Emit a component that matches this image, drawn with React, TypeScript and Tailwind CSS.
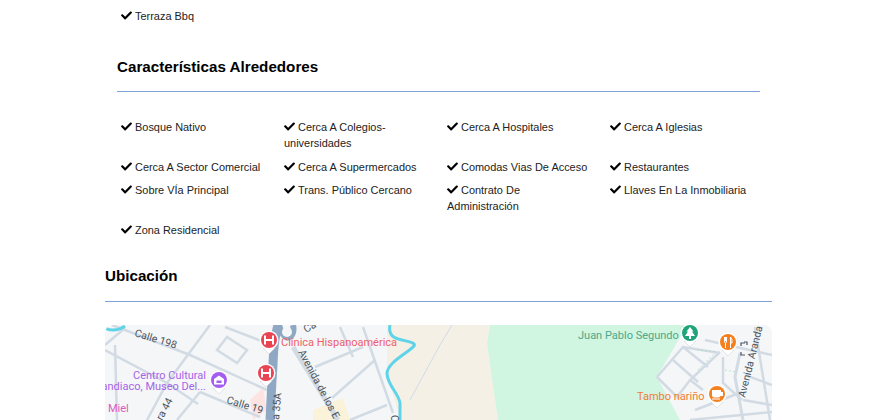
import React from 'react';
import { FaCheck } from 'react-icons/fa';

const topItems = ['Terraza Bbq'];

const nearbyItems = [
  'Bosque Nativo',
  'Cerca A Colegios-universidades',
  'Cerca A Hospitales',
  'Cerca A Iglesias',
  'Cerca A Sector Comercial',
  'Cerca A Supermercados',
  'Comodas Vias De Acceso',
  'Restaurantes',
  'Sobre VÍa Principal',
  'Trans. Público Cercano',
  'Contrato De Administración',
  'Llaves En La Inmobiliaria',
  'Zona Residencial',
];

const FeatureGrid: React.FC<{ items: string[] }> = ({ items }) => (
  <ul className="grid grid-cols-[repeat(4,163px)] gap-y-[7.5px] px-1">
    {items.map((item) => (
      <li key={item} className="pr-5 text-[10.95px] leading-4 text-[#222]">
        <FaCheck className="inline w-[11px] h-[11px] mr-[3px] align-[-1px] text-black" />
        {item}
      </li>
    ))}
  </ul>
);

const Pin: React.FC<{ x: number; y: number; color: string; children?: React.ReactNode }> = ({ x, y, color, children }) => (
  <g transform={`translate(${x} ${y})`}>
    <path d="M-6 8 L0 14 L6 8 Z" fill="#fff" stroke="#c9ccd0" strokeWidth="0.5" />
    <circle r="9.5" fill="#fff" />
    <circle r="8" fill={color} />
    {children}
  </g>
);

const HospitalMark = () => <path d="M-4 -4.5v9M4 -4.5v9M-4 0h8" stroke="#fff" strokeWidth="2" fill="none" />;

const MapView = () => (
  <div className="h-[95px] w-full rounded-t-lg overflow-hidden">
    <svg viewBox="105 325 667 95" width="667" height="95" className="block">
      <rect x="105" y="325" width="667" height="95" fill="#f5f6f7" />
      <path d="M387 325 L387 373 L400 420 L498 420 L487 343 L490 325 Z" fill="#f5f0e6" />
      <path d="M490 325 L487 343 L498 420 L680 420 L657 377 L687 325 Z" fill="#d0f5e0" />
      <path d="M250 400 L263 388 L267 410 L253 420 Z" fill="#fde4e2" />
      <path d="M313 410 L343 398 L350 420 L313 420 Z" fill="#faf3d9" />

      <g fill="none" stroke="#d2dbe4" strokeWidth="2.5">
        <path d="M112 325 L190 355 L267 390" />
        <path d="M105 350 L167 383 L198 404" />
        <path d="M210 325 L167 383 L147 420" />
        <path d="M115 345 L117 420" />
        <path d="M200 392 L260 417" />
        <path d="M200 392 L177 420" />
        <path d="M217 350 L227 337 L247 350 L237 363 Z" />
        <path d="M225 327 L272 345" />
        <path d="M105 345 L125 328" />
        <path d="M315 367 L363 347" />
        <path d="M332 398 L375 360" />
        <path d="M363 327 L393 413" />
        <path d="M340 327 L353 357" />
        <path d="M350 420 L387 405" />
        <path d="M293 347 L338 420" strokeWidth="5" />
      </g>
      <path d="M278 325 C272 345 274 360 272 380 L270 420" fill="none" stroke="#8fa8c4" strokeWidth="9" />
      <path d="M279 325 C284 345 296 338 293 325" fill="none" stroke="#8fa8c4" strokeWidth="6" />
      <circle cx="287" cy="332" r="5" fill="#f5f6f7" />

      <path d="M390 325 C388 336 394 338 402 340 C410 342 416 343 414 346 C408 353 388 362 387 373 C387 385 398 392 400 403 L400 420" fill="none" stroke="#5fd3e8" strokeWidth="3" strokeLinejoin="round" />
      <path d="M105 328 Q115 333 125 326" fill="none" stroke="#5fd3e8" strokeWidth="3" />
      <path d="M452 325 L440 345 L410 400" fill="none" stroke="#cfdbe6" strokeWidth="1" />

      <g fill="none" stroke="#d2dbe4" strokeWidth="2.5">
        <path d="M657 377 L683 347 L720 353" />
        <path d="M683 347 L708 367" />
        <path d="M673 360 L698 382" />
        <path d="M657 377 L677 397 L690 380 L720 352" />
        <path d="M690 380 L703 390" />
        <path d="M723 357 L723 383 L742 400" />
        <path d="M740 353 L735 377 L743 420" strokeWidth="3" />
        <path d="M755 327 L770 420" />
        <path d="M695 410 L742 392" />
        <path d="M745 375 L772 385" />
        <path d="M743 400 L772 405" />
        <path d="M690 420 L772 412" />
        <path d="M705 340 L772 355" />
      </g>
      <path d="M697 350 L717 352 M698 370 L715 353 M725 370 L737 372" fill="none" stroke="#a9dcc6" strokeWidth="0.8" strokeDasharray="2 2" />
      <path d="M741 346 V343 H745 M741 352 V355 H745" fill="none" stroke="#4b5563" strokeWidth="1.2" />
      <path d="M744 342 H747 V345" fill="none" stroke="#4b5563" strokeWidth="1.2" />

      <g fontFamily="Roboto, sans-serif" fontSize="10.5" fill="#4a5560">
        <text transform="translate(134 336) rotate(17)">Calle 198</text>
        <text transform="translate(226 403) rotate(17)">Calle 19</text>
        <text transform="translate(162 421) rotate(-62)">ra 44</text>
        <text transform="translate(279 420) rotate(-85)">a 35A</text>
        <text transform="translate(306 333) rotate(-30)">Ca</text>
        <text transform="translate(298 352) rotate(62)">Avenida de los E</text>
        <text transform="translate(391 415) rotate(90)">C</text>
        <text transform="translate(745 398) rotate(-76)">Avenida Aranda</text>
      </g>

      <g fontFamily="Roboto, sans-serif" fontSize="11">
        <text x="281" y="346" fill="#ee5e6c">Clínica Hispanoamérica</text>
        <text x="206" y="379" textAnchor="end" fill="#a564e8">Centro Cultural</text>
        <text x="206" y="390" textAnchor="end" fill="#a564e8">Bandiaco, Museo Del...</text>
        <text x="108" y="412" fill="#d95cc0">Miel</text>
        <text x="578" y="339" fill="#4ea88a">Juan Pablo Segundo</text>
        <text x="637" y="400" fill="#f07d33">Tambo nariño</text>
      </g>

      <Pin x={269} y={340} color="#ea4352"><HospitalMark /></Pin>
      <Pin x={266} y={373} color="#ea4352"><HospitalMark /></Pin>
      <Pin x={219} y={380} color="#a55cf0">
        <path d="M-5 -1 L0 -4.5 L5 -1 V4.5 H-5 Z M-2.5 0.5 V3 H2.5 V0.5 Z" fill="#fff" fillRule="evenodd" />
      </Pin>
      <Pin x={690} y={333} color="#1fa378">
        <path d="M0 -6 L3.5 -1.5 H2 L5 3 H1 V6 H-1 V3 H-5 L-2 -1.5 H-3.5 Z" fill="#fff" />
      </Pin>
      <Pin x={728} y={342} color="#f5801f">
        <path d="M-3.5 -5 V-1 Q-3.5 1 -2.5 1 V6 M-2.5 -5 V-1 M-1.5 -5 V-1 Q-1.5 1 -2.5 1 M2.5 6 V-5 Q4.5 -3 4 1 H2.5" fill="none" stroke="#fff" strokeWidth="1" />
      </Pin>
      <Pin x={717} y={394} color="#f5801f">
        <path d="M-5 -4 H4 V-2 H6 V2 H3.5 Q3 3.5 1 3.5 H-3 Q-5 3.5 -5 1 Z M-5 4.5 H3 V5.5 H-5 Z" fill="#fff" />
      </Pin>
    </svg>
  </div>
);

export default function App() {
  return (
    <div className="h-[420px] overflow-hidden bg-white font-['Liberation_Sans',Arial,sans-serif]">
      <div className="ml-[105px] w-[667px]">
        <div className="mx-3 pt-2">
          <FeatureGrid items={topItems} />
          <h3 className="mt-[33px] text-[15.2px] leading-5 font-bold text-black">Características Alrededores</h3>
          <div className="mt-[14px] mb-[27px] h-px bg-[#7fa2d8]" />
          <FeatureGrid items={nearbyItems} />
        </div>
        <h3 className="mt-[28px] text-[15.2px] leading-5 font-bold text-black">Ubicación</h3>
        <div className="mt-[15px] mb-[23px] h-px bg-[#7fa2d8]" />
        <MapView />
      </div>
    </div>
  );
}
